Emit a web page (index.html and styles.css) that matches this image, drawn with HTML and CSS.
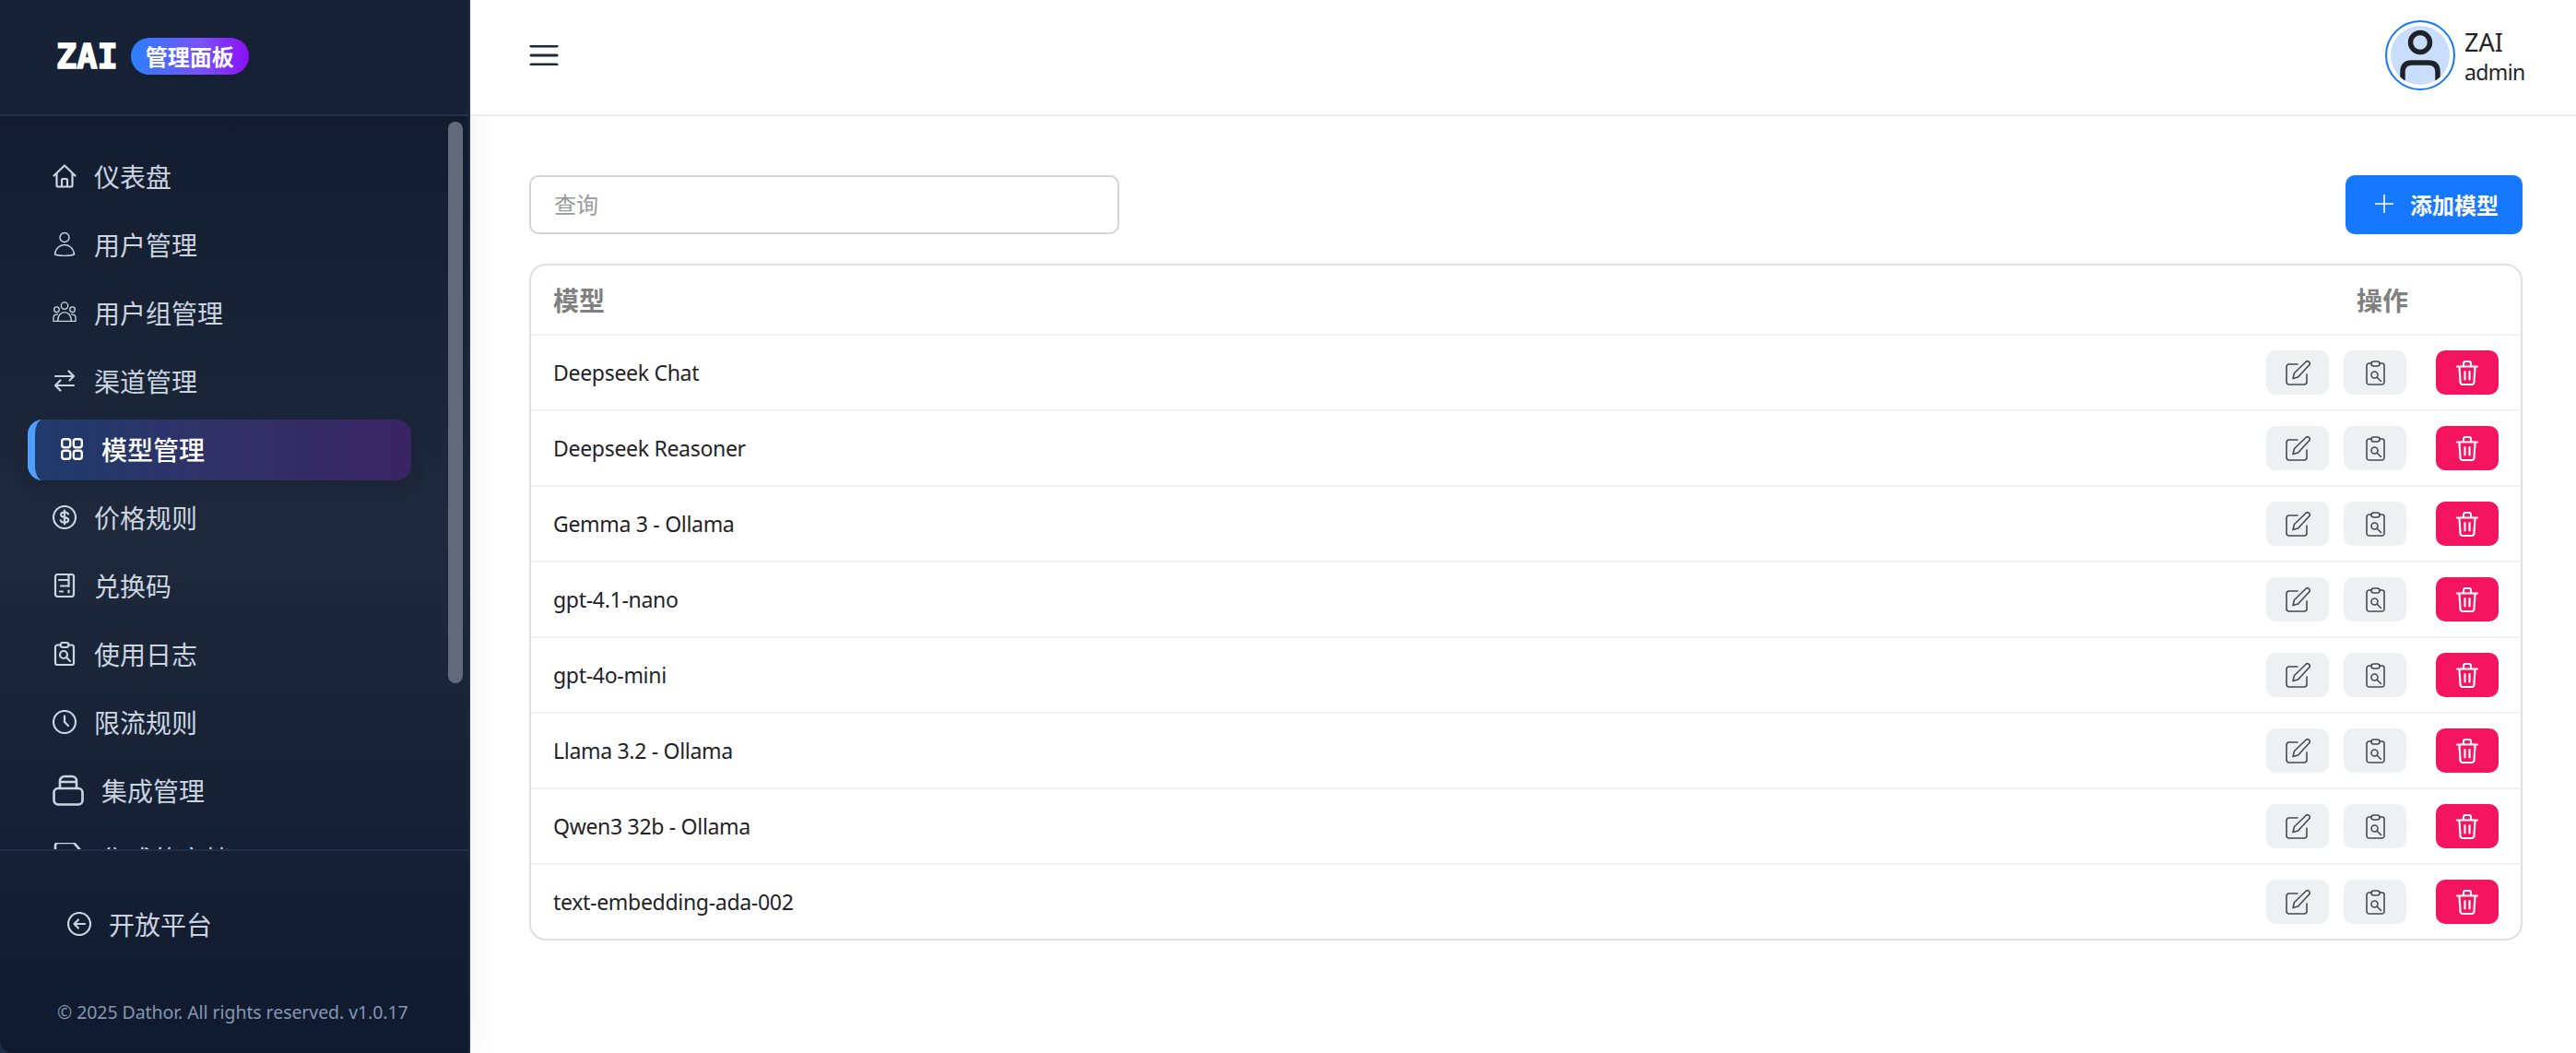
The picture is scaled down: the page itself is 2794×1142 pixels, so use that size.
FILE: index.html
```html
<!DOCTYPE html>
<html lang="zh-CN">
<head>
<meta charset="utf-8">
<title>模型管理</title>
<link rel="stylesheet" href="styles.css">
</head>
<body>
<svg class="defs" aria-hidden="true">
  <defs>
    <g id="i-edit"><path d="M13 4H4a3 3 0 0 0-3 3v16a3 3 0 0 0 3 3h16a3 3 0 0 0 3-3v-8"/><path d="M8 19.500l1.500-6L22 1.500a2.300 2.300 0 0 1 3.500 3.500L13.500 18Z"/></g>
    <g id="i-view"><path d="M6 3H3.500A2.500 2.500 0 0 0 1 5.500v18A2.500 2.500 0 0 0 3.500 26h14a2.500 2.500 0 0 0 2.500-2.500v-18A2.500 2.500 0 0 0 17.500 3H15"/><rect x="6" y="1" width="9" height="5" rx="2.500"/><circle cx="9.500" cy="15.500" r="3.500"/><path d="m12.200 18.200 4.300 4.300"/></g>
    <g id="i-trash"><path d="M1 6.500h22M8 6V3a2 2 0 0 1 2-2h4a2 2 0 0 1 2 2v3M3.500 7l1 16.500A2.500 2.500 0 0 0 7 26h10a2.500 2.500 0 0 0 2.500-2.500l1-16.500M9.500 12v8.500M14.500 12v8.500"/></g>
  </defs>
</svg>
<div class="app">
  <aside class="sidebar">
    <div class="sidebar-inner">
      <div class="brand">
        <span class="logo">ZAI</span>
        <span class="badge">管理面板</span>
      </div>
      <nav class="nav">
        <a class="item"><svg class="ico" viewBox="0 0 26 26"><path d="M1.5 12.5 13 1.5l11.5 11M4.5 10v13a1.5 1.5 0 0 0 1.5 1.5h14a1.5 1.5 0 0 0 1.5-1.5V10M10 24.500V17a1 1 0 0 1 1-1h4a1 1 0 0 1 1 1v7.500"/></svg><span>仪表盘</span></a>
        <a class="item"><svg class="ico thin" viewBox="0 0 26 26"><circle cx="13" cy="5.500" r="5"/><path d="M2.500 24C3 17.500 8 13.500 13 13.500s10 4 10.500 10.500C18 26 8 26 2.500 24Z"/></svg><span>用户管理</span></a>
        <a class="item"><svg class="ico thin" viewBox="0 0 28 26"><circle cx="14" cy="5" r="4"/><circle cx="4.800" cy="9.500" r="3"/><circle cx="23.200" cy="9.500" r="3"/><path d="M6 23c0-7 4-10.500 8-10.500S22 16 22 23M1 23h26M1 23v-4c0-3 2-4 5-4M27 23v-4c0-3-2-4-5-4"/></svg><span>用户组管理</span></a>
        <a class="item"><svg class="ico" viewBox="0 0 26 26"><path d="M3 8h20M17.500 2.500 23 8l-4.500 4.500M23 18H3M8.500 12.500 3 18l5.500 5.500"/></svg><span>渠道管理</span></a>
        <a class="item active"><svg class="ico bold" viewBox="0 0 24 24"><rect x="1.200" y="1.200" width="9" height="9" rx="2.500"/><rect x="13.800" y="1.200" width="9" height="9" rx="2.500"/><rect x="1.200" y="13.800" width="9" height="9" rx="2.500"/><rect x="13.800" y="13.800" width="9" height="9" rx="2.500"/></svg><span>模型管理</span></a>
        <a class="item"><svg class="ico" viewBox="0 0 26 26"><circle cx="13" cy="13" r="12"/><path d="M17 9.500C16.500 8 15 7.500 13 7.500c-2.300 0-4 1-4 2.800 0 4 8.200 1.600 8.200 5.500 0 1.800-1.800 2.800-4.200 2.800-2.200 0-3.700-.8-4.300-2.300M13 5.500v15"/></svg><span>价格规则</span></a>
        <a class="item"><svg class="ico" viewBox="0 0 26 26"><rect x="3" y="1" width="20" height="24" rx="2.500"/><path d="M7 7h10.500M17.500 1v13M9 13.500h8.500M17.500 18.500v2M8 19.500h3"/></svg><span>兑换码</span></a>
        <a class="item"><svg class="ico" viewBox="0 0 26 26"><path d="M8.500 3.500H5.500A2.500 2.500 0 0 0 3 6v17a2 2 0 0 0 2 2h16a2 2 0 0 0 2-2V6a2.500 2.500 0 0 0-2.500-2.500h-3"/><rect x="8.500" y="1" width="9" height="5" rx="2.500"/><circle cx="12" cy="14" r="4"/><path d="m15 17 4 4"/></svg><span>使用日志</span></a>
        <a class="item"><svg class="ico" viewBox="0 0 26 26"><circle cx="13" cy="13" r="12"/><path d="M13 6.500V13l4 4"/></svg><span>限流规则</span></a>
        <a class="item"><svg class="ico wide" viewBox="0 0 34 34"><rect x="1.500" y="15" width="31" height="17.500" rx="4.500"/><path d="M8 15v-8a5 5 0 0 1 5-5h8a5 5 0 0 1 5 5v8M8 8h18"/></svg><span>集成管理</span></a>
        <a class="item"><svg class="ico wide" viewBox="0 2 34 34"><path d="M3 28V5a3 3 0 0 1 3-3h17l8 9v17a3 3 0 0 1-3 3H6a3 3 0 0 1-3-3Z"/></svg><span>集成的文档</span></a>
      </nav>
      <div class="scroll-thumb"></div>
      <div class="side-foot">
        <a class="item"><svg class="ico" viewBox="0 0 26 26"><circle cx="13" cy="13" r="12"/><path d="M19 13H7.500M12 8.500 7.500 13l4.500 4.500"/></svg><span>开放平台</span></a>
        <p class="copy">© 2025 Dathor. All rights reserved. v1.0.17</p>
      </div>
    </div>
  </aside>
  <div class="main">
    <header class="topbar">
      <button class="burger"><svg viewBox="0 0 30 22"><path d="M1 1h28M1 11h28M1 21h28"/></svg></button>
      <div class="user">
        <div class="avatar"><svg viewBox="0 0 64 64"><circle cx="32" cy="18" r="10.500"/><path d="M13 58V50q0-10 10-10h18q10 0 10 10v8"/></svg></div>
        <div class="user-text"><div class="uname">ZAI</div><div class="urole">admin</div></div>
      </div>
    </header>
    <main class="content">
      <div class="toolbar">
        <input class="search" type="text" placeholder="查询">
        <button class="add"><svg viewBox="0 0 20 20"><path d="M10 0v20M0 10h20"/></svg>添加模型</button>
      </div>
      <section class="table">
        <div class="thead"><div class="cell-name">模型</div><div class="cell-act">操作</div></div>
        <div class="row"><div class="cell-name">Deepseek Chat</div><div class="acts"><button class="btn"><svg viewBox="0 0 27 27"><use href="#i-edit"/></svg></button><button class="btn"><svg viewBox="0 0 21 27"><use href="#i-view"/></svg></button><button class="btn danger"><svg viewBox="0 0 24 27"><use href="#i-trash"/></svg></button></div></div>
        <div class="row"><div class="cell-name">Deepseek Reasoner</div><div class="acts"><button class="btn"><svg viewBox="0 0 27 27"><use href="#i-edit"/></svg></button><button class="btn"><svg viewBox="0 0 21 27"><use href="#i-view"/></svg></button><button class="btn danger"><svg viewBox="0 0 24 27"><use href="#i-trash"/></svg></button></div></div>
        <div class="row"><div class="cell-name">Gemma 3 - Ollama</div><div class="acts"><button class="btn"><svg viewBox="0 0 27 27"><use href="#i-edit"/></svg></button><button class="btn"><svg viewBox="0 0 21 27"><use href="#i-view"/></svg></button><button class="btn danger"><svg viewBox="0 0 24 27"><use href="#i-trash"/></svg></button></div></div>
        <div class="row"><div class="cell-name">gpt-4.1-nano</div><div class="acts"><button class="btn"><svg viewBox="0 0 27 27"><use href="#i-edit"/></svg></button><button class="btn"><svg viewBox="0 0 21 27"><use href="#i-view"/></svg></button><button class="btn danger"><svg viewBox="0 0 24 27"><use href="#i-trash"/></svg></button></div></div>
        <div class="row"><div class="cell-name">gpt-4o-mini</div><div class="acts"><button class="btn"><svg viewBox="0 0 27 27"><use href="#i-edit"/></svg></button><button class="btn"><svg viewBox="0 0 21 27"><use href="#i-view"/></svg></button><button class="btn danger"><svg viewBox="0 0 24 27"><use href="#i-trash"/></svg></button></div></div>
        <div class="row"><div class="cell-name">Llama 3.2 - Ollama</div><div class="acts"><button class="btn"><svg viewBox="0 0 27 27"><use href="#i-edit"/></svg></button><button class="btn"><svg viewBox="0 0 21 27"><use href="#i-view"/></svg></button><button class="btn danger"><svg viewBox="0 0 24 27"><use href="#i-trash"/></svg></button></div></div>
        <div class="row"><div class="cell-name">Qwen3 32b - Ollama</div><div class="acts"><button class="btn"><svg viewBox="0 0 27 27"><use href="#i-edit"/></svg></button><button class="btn"><svg viewBox="0 0 21 27"><use href="#i-view"/></svg></button><button class="btn danger"><svg viewBox="0 0 24 27"><use href="#i-trash"/></svg></button></div></div>
        <div class="row last"><div class="cell-name">text-embedding-ada-002</div><div class="acts"><button class="btn"><svg viewBox="0 0 27 27"><use href="#i-edit"/></svg></button><button class="btn"><svg viewBox="0 0 21 27"><use href="#i-view"/></svg></button><button class="btn danger"><svg viewBox="0 0 24 27"><use href="#i-trash"/></svg></button></div></div>
      </section>
    </main>
  </div>
</div>
</body>
</html>
```
FILE: styles.css
```css
* { box-sizing: border-box; }
html, body { margin: 0; height: 100%; }
body {
  background: #fff;
  font-family: "Noto Sans", "Noto Sans CJK SC", sans-serif;
  color: #1f2329;
  overflow: hidden;
}
.defs { display: none; }
.app { display: flex; height: 1142px; }

/* sidebar */
.sidebar {
  position: relative;
  z-index: 1;
  flex: 0 0 510px;
  background: #1c2b47;
  padding-right: 2px;
  box-shadow: 4px 0 30px rgba(0, 0, 0, 0.05);
}
.sidebar-inner {
  position: relative;
  display: flex;
  flex-direction: column;
  height: 100%;
  border-bottom-left-radius: 14px;
  overflow: hidden;
  background: linear-gradient(180deg, #0f182c 0%, #1e293b 50%, #0f1a2f 100%);
}
.brand {
  flex: 0 0 126px;
  display: flex;
  align-items: center;
  gap: 14px;
  padding: 0 0 2px 61px;
  background: #172236;
  border-bottom: 2px solid #222e44;
}
.logo {
  font-family: "DejaVu Sans Mono", monospace;
  font-weight: 700;
  font-size: 37px;
  line-height: 1;
  color: #fff;
  -webkit-text-stroke: 1.5px #fff;
}
.badge {
  display: flex;
  align-items: center;
  justify-content: center;
  width: 128px;
  height: 40px;
  padding-bottom: 2px;
  border-radius: 20px;
  color: #fff;
  font-family: "Noto Sans CJK SC", sans-serif;
  font-size: 24px;
  font-weight: 700;
  background: linear-gradient(90deg, #2b80ff 0%, #7a50ff 60%, #8a0ff5 100%);
  box-shadow: 0 4px 12px rgba(0, 0, 0, 0.12);
}
.nav {
  flex: 1;
  min-height: 0;
  overflow: hidden;
  padding: 33px 0 0 30px;
}
.item {
  display: flex;
  align-items: center;
  gap: 19px;
  width: 416px;
  height: 66px;
  margin-bottom: 8px;
  padding-left: 27px;
  border-radius: 16px;
  color: #cbd5e1;
  font-family: "Noto Sans CJK SC", sans-serif;
  font-size: 28px;
}
.item span { padding-bottom: 3px; }
.item.active {
  padding-left: 28px;
  border-left: 8px solid #4f9fff;
  color: #fff;
  font-weight: 500;
  background: linear-gradient(90deg, #1e3a6b 0%, #2f3267 45%, #3a2463 100%);
  box-shadow: 0 6px 16px rgba(0, 0, 0, 0.1);
}
.ico {
  flex: 0 0 26px;
  width: 26px;
  height: 26px;
  margin-bottom: 2px;
  fill: none;
  stroke: currentColor;
  stroke-width: 2.200;
  stroke-linecap: round;
  stroke-linejoin: round;
}
.ico.thin { stroke-width: 1.4; }
.ico.bold { stroke-width: 2.4; width: 24px; height: 24px; flex-basis: 24px; margin-right: 1px; }
.ico.wide { flex: 0 0 34px; width: 34px; height: 34px; stroke-width: 2.6; }
.scroll-thumb {
  position: absolute;
  top: 132px;
  left: 486px;
  width: 16px;
  height: 609px;
  border-radius: 8px;
  background: #606a7b;
}
.side-foot {
  flex: 0 0 221px;
  padding: 47px 0 0 46px;
  border-top: 2px solid #222f47;
}
.copy {
  margin: 47px 0 0 16px;
  font-size: 19.500px;
  letter-spacing: -0.07px;
  line-height: 30px;
  color: #8696ae;
  white-space: nowrap;
}

/* main */
.main { flex: 1; min-width: 0; display: flex; flex-direction: column; }
.topbar {
  position: relative;
  z-index: 2;
  flex: 0 0 126px;
  display: flex;
  align-items: center;
  justify-content: space-between;
  padding: 0 57px 4px 64px;
  background: #fff;
  border-bottom: 2px solid #eeeeee;
}
.burger { padding: 0; border: 0; background: none; width: 32px; height: 22px; }
.burger svg { display: block; width: 32px; height: 22px; fill: none; stroke: #1f2937; stroke-width: 3; stroke-linecap: round; }
.user { display: flex; align-items: center; gap: 10px; }
.avatar {
  width: 76px;
  height: 76px;
  padding: 4px;
  border: 2px solid #1677ff;
  border-radius: 50%;
}
.avatar svg {
  display: block;
  width: 64px;
  height: 64px;
  border-radius: 50%;
  background: #c9defc;
  fill: none;
  stroke: #1f2329;
  stroke-width: 5.500;
  stroke-linecap: round;
}
.user-text { width: 64px; padding-top: 3px; }
.uname { font-size: 27px; line-height: 32px; }
.urole { font-size: 23px; letter-spacing: -0.6px; line-height: 32px; }
.content { flex: 1; padding: 64px 58px 0 64px; }
.toolbar { display: flex; justify-content: space-between; align-items: center; margin-bottom: 32px; }
.search {
  width: 640px;
  height: 64px;
  padding: 0 24px 3px 25px;
  border: 2px solid #d4d4d4;
  border-radius: 10px;
  outline: 0;
  font-family: "Noto Sans CJK SC", sans-serif;
  font-size: 24px;
  color: #1f2329;
}
.search::placeholder { color: #9a9a9a; opacity: 1; }
.add {
  display: flex;
  align-items: center;
  gap: 18px;
  width: 192px;
  height: 64px;
  padding: 0 0 2px 32px;
  border: 0;
  border-radius: 10px;
  background: #1677ff;
  color: #fff;
  font-family: "Noto Sans CJK SC", sans-serif;
  font-size: 24px;
  font-weight: 700;
}
.add svg { width: 20px; height: 20px; fill: none; stroke: #fff; stroke-width: 1.6; }
.table { border: 2px solid #e0e0e0; border-radius: 18px; overflow: hidden; }
.thead {
  display: flex;
  align-items: center;
  justify-content: space-between;
  height: 76px;
  padding: 0 122px 0 24px;
  border-bottom: 2px solid #f2f2f2;
  font-family: "Noto Sans CJK SC", sans-serif;
  font-size: 28px;
  font-weight: 700;
  color: #808080;
}
.row {
  display: flex;
  align-items: center;
  justify-content: space-between;
  height: 82px;
  padding: 0 24px;
  border-bottom: 2px solid #f2f2f2;
  font-size: 23px;
  letter-spacing: -0.3px;
}
.row.last { height: 80px; border-bottom: 0; }
.acts { display: flex; gap: 16px; }
.btn {
  display: flex;
  align-items: center;
  justify-content: center;
  width: 68px;
  height: 48px;
  padding: 0;
  border: 0;
  border-radius: 10px;
  background: #eff0f2;
}
.btn svg {
  height: 27px;
  width: auto;
  fill: none;
  stroke: #454a52;
  stroke-width: 1.6;
  stroke-linecap: round;
  stroke-linejoin: round;
}
.btn.danger { margin-left: 16px; background: #f51460; }
.btn.danger svg { stroke: #fff; stroke-width: 2.2; }
```
